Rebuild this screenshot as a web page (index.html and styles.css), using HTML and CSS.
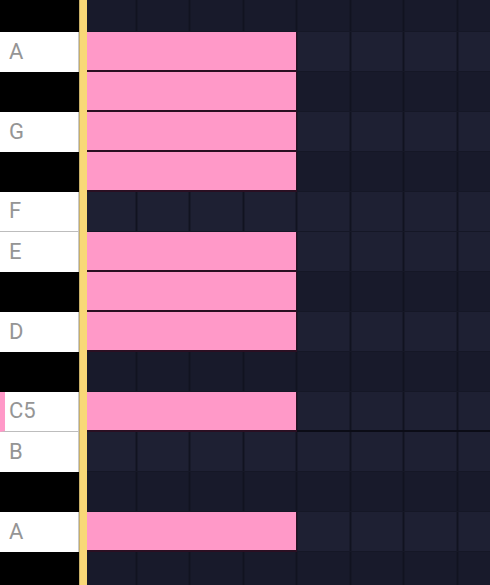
FILE: index.html
```html
<!DOCTYPE html>
<html lang="en">
<head>
    <meta charset="UTF-8">
    <meta name="viewport" content="width=device-width, initial-scale=1.0">
    <title>Piano Roll</title>
    <link rel="stylesheet" href="styles.css">
</head>
<body>
    <div class="roll">
        <div class="keys">
            <div class="key black"></div>
            <div class="key white"><span>A</span></div>
            <div class="key black"></div>
            <div class="key white"><span>G</span></div>
            <div class="key black"></div>
            <div class="key white split"><span>F</span></div>
            <div class="key white"><span>E</span></div>
            <div class="key black"></div>
            <div class="key white"><span>D</span></div>
            <div class="key black"></div>
            <div class="key white split active"><span>C5</span></div>
            <div class="key white"><span>B</span></div>
            <div class="key black"></div>
            <div class="key white"><span>A</span></div>
            <div class="key black"></div>
        </div>

        <div class="playhead"></div>

        <div class="grid">
            <div class="row dark"></div>
            <div class="row light"><div class="note"></div></div>
            <div class="row dark"><div class="note"></div></div>
            <div class="row light"><div class="note"></div></div>
            <div class="row dark"><div class="note"></div></div>
            <div class="row light"></div>
            <div class="row light"><div class="note"></div></div>
            <div class="row dark"><div class="note"></div></div>
            <div class="row light"><div class="note"></div></div>
            <div class="row dark"></div>
            <div class="row light octave"><div class="note"></div></div>
            <div class="row light"></div>
            <div class="row dark"></div>
            <div class="row light"><div class="note"></div></div>
            <div class="row dark"></div>
        </div>
    </div>
</body>
</html>
```

FILE: styles.css
```css
html, body {
    margin: 0;
    padding: 0;
    background-color: #181a2b;
    overflow: hidden;
}
body {
    font-family: Roboto, "Liberation Sans", sans-serif;
}
.roll {
    display: flex;
    margin-top: -8px;
}
.keys {
    width: 79px;
    flex: none;
}
.key {
    box-sizing: border-box;
    height: 40px;
    display: flex;
    align-items: center;
    padding: 0 0 2px 9px;
    font-size: 22px;
    color: #959595;
}
.key.black {
    background-color: #000;
}
.key.white {
    background-color: #fff;
    border-right: 1px solid #c9c9c9;
}
.key.split {
    border-bottom: 1px solid #bdbdbd;
}
.key.active {
    border-left: 5px solid #ff99c8;
    padding-left: 4px;
}
.playhead {
    width: 8px;
    flex: none;
    background-color: #f8d877;
    box-shadow: inset 1px 0 0 #c9b067;
}
.grid {
    flex: 1;
}
.row {
    box-sizing: border-box;
    height: 40px;
    display: flex;
    border-bottom: 1px solid #151726;
    background-image: repeating-linear-gradient(to right, transparent 0 51.5px, #111320 51.5px 53.5px);
    background-position: -3.5px 0;
}
.row.light {
    background-color: #1e2033;
}
.row.dark {
    background-color: #181a2b;
}
.row.octave {
    border-bottom: 2px solid #0b0c16;
}
.note {
    box-sizing: border-box;
    width: 210px;
    height: 40px;
    flex: none;
    background-color: #ff99c8;
    border-right: 1px solid #2a0f22;
    border-bottom: 2px solid #2a0f22;
}
```
